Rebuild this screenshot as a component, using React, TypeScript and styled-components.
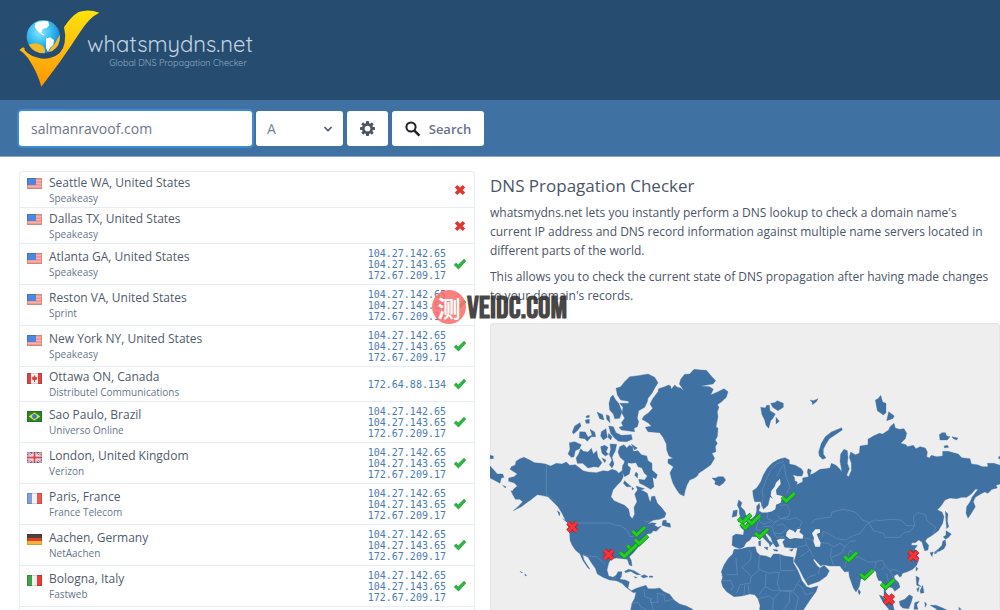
import React from "react";
import styled, { createGlobalStyle } from "styled-components";

const GlobalStyle = createGlobalStyle`
  *, *::before, *::after { box-sizing: border-box; }
  body {
    margin: 0;
    background: #fff;
    color: #4a5568;
    font-family: "Open Sans", "Noto Sans", sans-serif;
  }
`;

const Page = styled.div`
  position: relative;
  display: flex;
  flex-direction: column;
  height: 100vh;
  overflow: hidden;
`;

const Header = styled.header`
  flex: none;
  height: 100px;
  padding: 8px 18px;
  background: #264d70;
`;

const Brand = styled.a`
  display: inline-flex;
  align-items: flex-start;
  color: #c3d3e2;
  text-decoration: none;
`;

const BrandText = styled.span`
  display: flex;
  flex-direction: column;
  align-items: flex-end;
  margin-left: -13px;
  padding-top: 22px;
  font-family: Quicksand, Lato, sans-serif;
  font-weight: 400;
`;

const BrandName = styled.span`
  font-size: 22px;
  line-height: 28px;
`;

const Tagline = styled.span`
  padding-right: 6px;
  color: #8fabc6;
  font-size: 9px;
  line-height: 9px;
`;

const SearchBar = styled.form`
  flex: none;
  display: flex;
  gap: 4px;
  height: 57px;
  padding: 11px 19px;
  background: #4071a3;
  border-bottom: 1px solid #86a5c4;
`;

const controlHeight = "35px";

const DomainInput = styled.input`
  width: 233px;
  height: ${controlHeight};
  padding: 0 12px;
  border: 0;
  border-radius: 3px;
  outline: 0;
  box-shadow: 0 0 0 2px #3f8bd0;
  color: #6b7687;
  font: 14px "Open Sans", "Noto Sans", sans-serif;
`;

const SelectWrap = styled.span`
  position: relative;
  display: block;
  width: 87px;
`;

const TypeSelect = styled.select`
  appearance: none;
  width: 100%;
  height: ${controlHeight};
  padding: 0 11px;
  border: 0;
  border-radius: 3px;
  background: #fff;
  color: #718096;
  font: 14px "Open Sans", "Noto Sans", sans-serif;
`;

const Chevron = styled.svg`
  position: absolute;
  top: 14px;
  right: 10px;
  pointer-events: none;
`;

const Button = styled.button<{ $wide?: boolean }>`
  display: flex;
  align-items: center;
  justify-content: center;
  gap: 8px;
  width: ${(p) => (p.$wide ? "92px" : "41px")};
  height: ${controlHeight};
  padding: 0;
  border: 0;
  border-radius: 3px;
  background: #fff;
  color: #66738a;
  font: 600 13px "Open Sans", "Noto Sans", sans-serif;
`;

const Main = styled.main`
  flex: 1;
  display: grid;
  grid-template-columns: minmax(0, 456fr) minmax(0, 510fr);
  gap: 15px;
  min-height: 0;
  padding: 14px 0 0 19px;
`;

const Results = styled.ul`
  margin: 0;
  padding: 0;
  list-style: none;
  border: 1px solid #e6edf6;
  border-bottom: 0;
  border-radius: 4px 4px 0 0;
`;

const rowHeights: Record<number, string> = { 0: "36px", 1: "35px", 3: "41px" };

const Row = styled.li<{ $lines: number }>`
  display: flex;
  align-items: center;
  height: ${(p) => rowHeights[p.$lines]};
  padding: 0 8px 0 7px;
  border-bottom: 1px solid #e6edf6;
`;

const FlagBox = styled.span`
  align-self: stretch;
  display: flex;
  align-items: center;
  width: 22px;
  padding-bottom: 12px;
`;

const Place = styled.span`
  flex: 1;
  display: flex;
  flex-direction: column;
`;

const City = styled.span`
  color: #4f5b6c;
  font-size: 12px;
  line-height: 17px;
`;

const Provider = styled.span`
  color: #68758a;
  font-size: 10px;
  line-height: 15px;
`;

const Addresses = styled.span`
  display: flex;
  flex-direction: column;
  margin-right: 8px;
`;

const Address = styled.a`
  color: #4a7cb3;
  font: 10px/11px "DejaVu Sans Mono", monospace;
  text-decoration: none;
`;

const Info = styled.section`
  min-width: 0;
`;

const Title = styled.h1`
  margin: 2px 0 4px;
  font-size: 17px;
  font-weight: 400;
  line-height: 26px;
`;

const Text = styled.p`
  margin: 0 0 7px;
  font-size: 12px;
  line-height: 19px;
`;

const MapPanel = styled.div`
  margin-top: 18px;
  border-radius: 4px;
  background: #eeeeee;
  box-shadow: inset 0 0 0 1px #e5e5e5;
  overflow: hidden;
`;

const WorldMap = styled.svg`
  display: block;
  width: 100%;
  height: auto;
`;

const Watermark = styled.div`
  position: absolute;
  top: 286px;
  left: 432px;
  display: flex;
  align-items: center;
  gap: 1px;
  pointer-events: none;
`;

const Seal = styled.span`
  display: flex;
  align-items: center;
  justify-content: center;
  width: 34px;
  height: 34px;
  border-radius: 50%;
  background: rgba(250, 112, 108, 0.88);
  color: #fff;
  font: 700 23px "Noto Sans CJK SC", sans-serif;
`;

const WatermarkText = styled.span`
  padding-top: 4px;
  color: rgba(48, 44, 44, 0.88);
  font: 700 31px/38px "Bebas Neue", Oswald, "Liberation Serif", serif;
`;

const Logo = () => (
  <svg width="82" height="80" viewBox="8 24 246 240" aria-hidden="true">
    <defs>
      <linearGradient id="gold" x1="0" y1="0" x2="0" y2="1">
        <stop offset="0" stopColor="#ffe30a" />
        <stop offset="0.55" stopColor="#ffb80e" />
        <stop offset="1" stopColor="#ff9500" />
      </linearGradient>
      <radialGradient id="globe" cx="0.4" cy="0.35" r="0.7">
        <stop offset="0" stopColor="#8fe6ff" />
        <stop offset="0.5" stopColor="#35bdf0" />
        <stop offset="1" stopColor="#1478c8" />
      </radialGradient>
    </defs>
    <path
      d="M12 150L23 142Q38 152 48 162Q74 182 104 174Q150 168 180 128Q198 104 188 84Q200 50 212 40Q226 26 252 38Q222 52 196 94Q166 140 136 182Q102 228 78 260Q66 218 44 184Q30 160 12 150Z"
      fill="none"
    />
    <path
      d="M12 150L23 142Q36 152 48 162Q74 182 104 174Q142 164 148 128Q152 104 146 82Q166 50 190 36Q220 26 252 38Q222 52 196 94Q166 140 136 182Q102 228 78 260Q66 218 44 184Q30 160 12 150Z"
      fill="url(#gold)"
    />
    <path d="M30 146Q52 172 88 168Q138 162 142 112Q142 96 138 86" fill="none" stroke="#264d70" strokeWidth="9" />
    <circle cx="84" cy="110" r="50" fill="url(#globe)" />
    <path d="M60 70Q74 60 98 64L102 76L94 84L82 86L78 98L90 106L82 106L66 92L58 80Z" fill="#fff" />
    <path d="M92 116L104 112L116 120L114 134L104 144L98 156L92 144Z" fill="#fff" />
    <path d="M40 134Q60 124 80 136Q92 146 88 160Q56 160 40 134Z" fill="#f5bb27" />
    <path d="M134 104Q136 138 110 154L100 156Q106 142 118 132Q126 116 134 104Z" fill="#f5bb27" />
  </svg>
);

const GearIcon = () => (
  <svg width="15" height="15" viewBox="0 0 20 20" aria-hidden="true">
    <g fill="#4a5568">
      {[0, 45, 90, 135].map((a) => (
        <rect key={a} x="8" y="0" width="4" height="20" rx="1" transform={`rotate(${a} 10 10)`} />
      ))}
      <circle cx="10" cy="10" r="7.4" />
    </g>
    <circle cx="10" cy="10" r="3.8" fill="#fff" />
  </svg>
);

const SearchIcon = () => (
  <svg width="16" height="16" viewBox="0 0 16 16" aria-hidden="true">
    <circle cx="6" cy="6" r="4.6" fill="none" stroke="#1f2328" strokeWidth="2" />
    <path d="M9.4 9.6L14.4 14.6" stroke="#1f2328" strokeWidth="2.6" />
  </svg>
);

const StatusIcon = ({ ok }: { ok: boolean }) => (
  <svg width="12" height="12" viewBox="0 0 12 12" role="img" aria-label={ok ? "Resolved" : "Failed"}>
    {ok ? (
      <path d="M1 5.8L4.4 9L11.2 2" fill="none" stroke="#2fb344" strokeWidth="3.4" />
    ) : (
      <path d="M2 2.2L10 9.8M10 2.2L2 9.8" fill="none" stroke="#e3342f" strokeWidth="3.6" />
    )}
  </svg>
);

type Country = "us" | "ca" | "br" | "gb" | "fr" | "de" | "it";

const flagArt: Record<Country, React.ReactNode> = {
  us: (
    <>
      <rect width="15" height="11" fill="#f7b3ac" />
      <path d="M0 1H15M0 4H15M0 7H15M0 10H15" stroke="#ef8279" strokeWidth="1" />
      <rect width="9" height="7" fill="#4c86e0" />
    </>
  ),
  ca: (
    <>
      <rect width="15" height="11" fill="#fbeeee" />
      <path d="M0 0H4V11H0ZM11 0H15V11H11Z" fill="#df4540" />
      <path d="M7.5 2L8.6 4L10.4 4.4L9.4 7H8V9H7V7H5.6L4.6 4.4L6.4 4Z" fill="#e0403c" />
    </>
  ),
  br: (
    <>
      <rect width="15" height="11" fill="#27862b" />
      <path d="M7.5 1.4L13.4 5.5L7.5 9.6L1.6 5.5Z" fill="#dfe04a" />
      <circle cx="7.5" cy="5.5" r="2.4" fill="#3f78c4" />
    </>
  ),
  gb: (
    <>
      <rect width="15" height="11" fill="#6673b5" />
      <path d="M0 0L15 11M15 0L0 11" stroke="#f4d6dc" strokeWidth="2.4" />
      <path d="M0 0L15 11M15 0L0 11" stroke="#dd5a62" strokeWidth="0.8" />
      <path d="M7.5 0V11M0 5.5H15" stroke="#fff" strokeWidth="4" />
      <path d="M7.5 0V11M0 5.5H15" stroke="#e0474c" strokeWidth="2" />
    </>
  ),
  fr: (
    <>
      <rect width="15" height="11" fill="#f3f3f5" />
      <rect width="5" height="11" fill="#7f9fdd" />
      <rect x="10" width="5" height="11" fill="#f0574f" />
    </>
  ),
  de: (
    <>
      <rect width="15" height="4" fill="#4c4340" />
      <rect y="4" width="15" height="3" fill="#e0412e" />
      <rect y="7" width="15" height="4" fill="#f3b53a" />
    </>
  ),
  it: (
    <>
      <rect width="15" height="11" fill="#f6f4f2" />
      <rect width="5" height="11" fill="#3fa14a" />
      <rect x="10" width="5" height="11" fill="#ec3a35" />
    </>
  ),
};

const Flag = ({ country }: { country: Country }) => (
  <svg width="15" height="11" viewBox="0 0 15 11" aria-hidden="true">
    {flagArt[country]}
    <rect x="0.5" y="0.5" width="14" height="10" fill="none" stroke="#000" strokeOpacity="0.13" />
  </svg>
);

const pool = ["104.27.142.65", "104.27.143.65", "172.67.209.17"];

const servers: { country: Country; city: string; provider: string; ips: string[] }[] = [
  { country: "us", city: "Seattle WA, United States", provider: "Speakeasy", ips: [] },
  { country: "us", city: "Dallas TX, United States", provider: "Speakeasy", ips: [] },
  { country: "us", city: "Atlanta GA, United States", provider: "Speakeasy", ips: pool },
  { country: "us", city: "Reston VA, United States", provider: "Sprint", ips: pool },
  { country: "us", city: "New York NY, United States", provider: "Speakeasy", ips: pool },
  { country: "ca", city: "Ottawa ON, Canada", provider: "Distributel Communications", ips: ["172.64.88.134"] },
  { country: "br", city: "Sao Paulo, Brazil", provider: "Universo Online", ips: pool },
  { country: "gb", city: "London, United Kingdom", provider: "Verizon", ips: pool },
  { country: "fr", city: "Paris, France", provider: "France Telecom", ips: pool },
  { country: "de", city: "Aachen, Germany", provider: "NetAachen", ips: pool },
  { country: "it", city: "Bologna, Italy", provider: "Fastweb", ips: pool },
];

const americas = [
  "M108 412L125 420 140 428 158 430 172 432 188 438 205 430 222 432 235 426 245 436 262 434 275 444 285 452 300 456 325 458 345 452 360 454 372 448 385 452 392 460 402 452 406 470 398 485 388 495 375 510 369 530 378 542 395 550 410 556 422 568 426 588 433 596 440 582 438 562 447 545 440 522 450 508 465 512 478 520 484 540 488 546 490 530 500 528 508 550 520 562 534 580 530 592 515 598 495 601 478 612 492 608 505 610 499 616 510 622 520 618 505 634 496 632 490 640 478 642 470 652 460 668 450 682 435 700 424 710 430 722 432 738 424 735 418 718 405 716 385 714 368 718 362 730 357 750 362 768 375 772 385 765 390 755 402 755 400 770 395 778 412 780 424 786 420 804 430 812 445 805 460 800 450 815 436 818 422 808 412 800 402 790 385 782 365 780 345 772 328 762 322 745 310 728 300 712 284 704 288 720 306 748 300 744 285 722 276 702 262 690 252 675 246 660 245 640 240 610 232 600 222 580 210 560 195 545 180 530 160 526 148 524 138 532 128 540 120 545 100 560 76 572 90 560 104 545 95 538 82 538 72 520 76 508 88 498 78 488 62 484 62 474 78 470 88 462 66 448 70 440 82 435 84 424 96 416Z",
  "M428 870L432 850 440 835 445 812 460 800 474 796 480 806 500 806 515 804 528 815 545 823 558 840 575 852 595 858 614 868 614 880 428 880Z",
  "M486 252L495 235 510 215 512 206 530 200 542 195 548 198 550 208 560 195 568 202 578 204 587 212 582 203 574 192 578 178 590 163 605 162 618 148 640 150 655 151 670 168 683 182 675 192 638 198 665 200 676 208 668 225 690 215 708 206 720 215 715 232 700 246 688 254 693 262 688 275 690 290 684 320 690 325 688 350 682 360 688 370 682 380 684 395 672 400 680 415 668 435 650 448 632 460 628 468 618 475 605 480 597 495 592 510 588 528 575 522 565 508 555 490 550 475 546 458 556 440 540 430 540 418 555 415 543 408 536 390 535 372 525 352 515 338 480 335 472 322 490 318 480 308 462 298 468 288 482 278 494 265Z",
  "M384 205L398 200 410 185 425 170 450 167 480 162 500 172 510 188 500 205 492 220 480 235 478 245 470 262 452 272 448 295 452 305 448 320 438 325 440 335 400 330 393 322 405 318 400 308 410 295 402 280 405 262 395 250 422 250 422 244 398 240 388 225Z",
  "M375 225L383 240 392 250 402 275 395 295 380 296 376 282 365 270 363 250 368 232Z",
  "M362 318L376 320 384 338 400 346 430 344 433 358 416 365 392 364 380 355 368 340Z",
  "M244 368L260 365 280 374 274 386 262 392 258 410 250 412 240 402 246 388Z",
  "M278 386L286 394 300 396 310 385 316 402 326 392 330 412 342 428 332 442 318 440 300 444 284 430 268 430 264 414 272 402Z",
  "M275 335L292 336 300 352 312 345 306 328 320 336 323 350 310 350 298 364 290 356 274 354Z",
  "M253 336L260 318 276 308 279 318 268 332 256 342Z",
  "M327 276L344 284 348 300 335 296ZM355 284L364 288 366 308 356 298ZM294 288L304 286 304 292 296 294ZM292 300L304 298 304 310 294 310Z",
  "M340 335L354 326 358 352 346 360 338 348ZM362 340L372 350 368 360 360 352Z",
  "M338 380L350 376 360 382 354 396 362 402 352 408 342 400ZM366 372L386 373 382 392 372 412 378 432 372 444 364 434 372 420 364 404 368 388ZM342 414L354 420 350 428Z",
  "M395 380L408 374 416 384 424 376 434 380 436 394 450 392 460 404 476 408 480 422 492 430 492 450 508 464 504 476 494 472 498 500 488 508 468 496 455 490 452 478 470 480 478 468 468 458 462 444 450 440 444 428 430 430 420 428 418 440 406 436 410 424 396 412 390 396Z",
  "M430 372L448 384 440 390ZM404 436L412 430 428 444 424 462 410 470 402 456ZM444 456L450 462 448 474 440 466ZM410 482L420 492 430 500 416 500 406 490ZM444 498L470 506 450 512ZM432 502L438 506 432 510Z",
  "M672 474L684 474 690 470 706 470 713 480 706 490 694 498 680 492 682 484Z",
  "M524 602L534 600 536 608 546 610 548 622 538 620 530 618 522 616Z",
  "M6 438L14 446 28 462 44 462 48 472 40 474 36 490 22 482 6 474ZM6 406L16 408 16 416 6 416ZM44 496L54 500 52 504ZM68 512L76 514 72 518ZM208 572L216 578 214 588ZM224 596L240 606 236 606Z",
  "M410 754L422 748 438 752 458 764 446 764 428 754 412 758ZM458 768L470 764 480 770 466 774ZM484 768L494 768 494 772 484 772ZM438 770L448 772 442 774ZM96 754L104 758 100 758ZM110 762L116 766 112 768Z",
];

const oldWorld = [
  "M-22 648L-12 642 10 645 12 630 2 622 18 614 24 604 38 594 46 586 50 574 50 558 58 550 60 562 56 572 66 578 80 578 95 574 106 568 106 552 120 548 90 530 84 556 70 568 62 545 44 545 40 530 38 512 50 504 62 486 70 465 82 445 96 430 112 420 122 416 135 413 148 420 148 432 166 436 184 446 190 456 186 468 172 468 158 464 164 474 164 482 172 486 170 494 182 488 188 486 188 474 206 470 202 456 204 446 214 450 210 464 222 460 240 448 256 446 270 444 274 430 288 436 300 448 306 456 300 424 302 402 312 388 322 392 324 412 322 430 328 446 320 466 326 470 334 452 334 430 328 412 332 396 346 404 358 400 360 378 384 374 384 358 400 348 418 340 428 342 446 330 450 320 462 310 466 324 478 328 492 326 500 340 496 356 482 370 498 374 502 380 520 376 528 386 540 380 556 384 562 396 560 410 568 414 574 406 590 410 608 408 608 394 624 394 640 398 655 402 665 413 690 416 694 432 712 434 728 440 744 440 742 430 762 430 786 438 786 490 768 496 772 504 756 508 744 520 734 516 722 522 706 532 700 545 706 560 694 580 684 595 678 580 680 560 690 546 696 532 714 508 706 508 694 522 680 532 665 532 650 536 630 534 615 540 605 555 592 570 606 576 612 590 608 610 595 632 582 642 570 650 560 656 556 664 566 676 564 690 554 692 550 680 546 666 536 660 526 668 516 668 514 676 532 676 524 688 530 705 536 720 530 736 518 748 500 756 488 760 480 772 472 762 462 768 464 776 476 788 480 802 464 814 458 804 446 800 440 798 436 812 446 836 458 850 464 876 455 868 440 845 432 826 432 800 424 782 416 782 410 768 408 755 400 750 388 754 380 766 362 778 358 800 348 816 340 804 328 770 326 754 314 756 304 744 300 738 270 738 250 734 242 738 222 716 220 720 232 738 240 744 252 736 268 752 260 768 238 784 204 796 190 772 176 744 162 724 168 706 172 684 156 684 134 682 128 666 136 656 120 656 110 660 118 678 108 682 98 668 92 652 78 638 74 640 88 662 98 670 90 680 88 672 68 652 60 642 48 650 36 650 30 660 18 668 12 680 0 686 -14 682 -24 676Z",
  "M-18 688L0 688 22 682 46 680 50 696 60 706 78 708 92 714 100 702 116 702 134 708 160 712 160 728 174 752 186 782 200 800 212 804 234 798 228 815 210 840 190 870 190 880 58 880 60 856 54 836 44 824 30 822 5 828 -18 830 -40 815 -52 800 -56 785 -52 770 -56 755 -48 735 -35 715 -22 702Z",
  "M-4 540L6 548 2 560 14 572 18 586 24 590 16 602 -6 606 2 594 -2 580 -2 568 -8 556ZM-20 572L-8 570 -10 588 -24 592Z",
  "M238 408L236 396 244 370 256 350 274 336 305 323 307 330 286 344 268 356 258 372 250 388 250 402 258 414 248 418Z",
  "M62 262L76 264 80 256 88 256 90 272 106 282 98 296 92 302 86 325 78 316 74 300 66 284ZM92 250L104 248 112 242 130 250 130 262 114 272 98 262ZM108 292L118 304 108 312Z",
  "M210 240L220 242 234 236 230 244 218 254 216 246Z",
  "M406 240L414 236 422 226 428 246 438 250 438 278 430 285 412 272ZM446 275L463 288 458 296 440 302Z",
  "M598 344L606 338 616 338 620 348 630 350 622 360 600 360ZM636 350L654 354 650 360 640 356ZM612 378L622 376 626 382 614 384ZM776 410L786 408 786 416 776 416Z",
  "M616 574L624 582 622 602 626 620 620 626 618 604ZM618 632L634 642 626 652 616 658 610 650 618 646ZM616 660L618 674 612 686 598 694 584 696 596 686 606 676 608 664ZM570 698L580 696 576 710ZM584 696L592 698 584 702Z",
  "M356 808L362 816 358 824 354 816ZM528 740L534 746 528 754ZM528 768L538 774 534 792 544 800 530 796ZM548 796L552 818 542 820 540 812ZM530 806L538 802 534 816ZM480 762L486 766 482 770Z",
  "M478 844L494 838 508 824 518 830 514 846 506 866 488 864 480 856ZM418 826L426 828 456 862 464 880 450 872 430 848ZM524 848L538 844 530 854 534 868 522 868ZM554 846L560 852 556 862ZM570 856L588 856 608 864 640 880 600 880 588 866ZM656 862L664 868 658 870Z",
  "M100 688L114 690 112 694 102 692ZM148 690L160 686 156 694ZM56 664L62 662 62 678 56 676ZM72 682L84 682 82 690Z",
];

const inlandSeas = [
  "M120 476L108 488 104 500 94 512 92 526 98 536 94 548 86 562 72 568 68 576 84 576 96 574 106 566 108 554 122 548 124 540 140 540 126 528 110 524 108 510 122 492Z",
  "M138 648L140 636 148 628 160 632 166 638 172 628 182 626 178 636 190 646 188 656 164 654 150 658Z",
  "M216 640L226 628 240 628 240 638 230 642 236 656 242 668 240 680 226 680 220 664 222 654Z",
];

const americasBorders =
  "M175 432V526L188 532 204 546M243 609H366L378 614 400 618 420 634 426 650 440 648M284 704L300 708 324 710 340 722 352 734M470 604L484 604M372 780L384 772M398 786L404 792M468 808L470 830 490 836 488 848 510 846 508 820 528 824 530 844 554 838M430 852L450 846 458 860 474 868M486 836L496 870M700 768L708 762 722 736 742 736 744 710";

const oldWorldBorders =
  "M64 560L70 530 66 512 80 476 92 450 108 432 132 424M110 470L120 450 132 432 138 470 150 500 140 520M120 556L140 554 150 572 146 590 120 596 112 586M84 578L82 594 100 606 118 600M60 580L58 604 70 612 92 606M40 596L54 608 48 628 62 632M70 620L96 618 110 604M96 620L104 640 124 640 140 626 130 612 110 616M120 596L150 598 168 592 186 606 180 620 166 628M100 636L110 652 132 650M214 610L224 598 248 594 272 592 276 576 310 568 346 576 368 600 386 608 372 624 360 640 338 648 316 660 290 656 268 642 250 634 246 652M386 608L400 632 430 640 436 652 478 652 492 638 510 634 524 618 500 616 482 600 450 598 420 602 404 600ZM524 618L520 590 534 578 556 584 562 604 588 622 578 642M242 668L262 670 282 680 300 670 316 680 330 664 348 662M188 652L212 658 220 664M168 682L200 676 210 690 220 712M200 676L196 660M210 690L196 700 178 712M274 684L272 712 282 738M316 680L304 700 276 712M330 690L320 720 314 744M330 690L352 710 386 726 408 726 426 720 436 738 424 750M408 728L404 746M436 738L450 752 462 748 480 756M440 760L446 790M450 752L460 774 470 790M336 710L352 712M228 764L208 770 198 780M234 764L240 744M26 690L34 700 32 720 6 742M58 706L56 748 88 760 118 756M120 704L122 752 164 752M6 742L34 770 56 750M34 770L30 790 0 794M78 762L76 800 56 824M118 756L112 788 120 812 160 812 172 790 180 780M76 800L100 812 118 810M54 836L88 828 100 838 98 870M100 838L122 812 160 816 176 834 166 870M172 792L186 802 196 824 220 818M150 816L148 846 130 870M-40 764L-8 764 -12 714M0 794L-10 820M14 796L12 826M24 794L28 822M-52 782H-28L-20 800 -28 812";

type Point = [number, number];

const failed: Point[] = [[247, 612], [356, 695], [1270, 698], [1197, 829]];
const resolved: Point[] = [
  [895, 522], [446, 624], [431, 668], [454, 650], [409, 688], [764, 586], [772, 603], [791, 590],
  [815, 630], [1082, 700], [1130, 753], [1193, 782],
];

const failedShape = "M-13 -13L13 13M13 -13L-13 13";
const resolvedShape = "M-19 0L-6 12L19 -12";

const Marker = ({ at, ok }: { at: Point; ok: boolean }) => (
  <g transform={`translate(${at[0]} ${at[1]})`} fill="none">
    <path d={ok ? resolvedShape : failedShape} stroke={ok ? "#168a22" : "#a3262c"} strokeWidth={ok ? 13 : 15} />
    <path d={ok ? resolvedShape : failedShape} stroke={ok ? "#22d022" : "#fa3236"} strokeWidth={ok ? 9 : 10} />
  </g>
);

const PropagationMap = () => (
  <WorldMap viewBox="0 0 1530 864" role="img" aria-label="Map of DNS propagation results">
    <g transform="translate(-6 -9)" fill="#4071a3" stroke="#4071a3" strokeWidth="1" strokeLinejoin="round">
      {americas.map((d) => (
        <path key={d} d={d} />
      ))}
      <path d={americasBorders} fill="none" stroke="#6890b8" strokeWidth="2" />
    </g>
    <g transform="translate(750 -9)" fill="#4071a3" stroke="#4071a3" strokeWidth="1" strokeLinejoin="round">
      {oldWorld.map((d) => (
        <path key={d} d={d} />
      ))}
      {inlandSeas.map((d) => (
        <path key={d} d={d} fill="#eeeeee" stroke="none" />
      ))}
      <path d={oldWorldBorders} fill="none" stroke="#6890b8" strokeWidth="2" />
    </g>
    {resolved.map((p) => (
      <Marker key={p.join()} at={p} ok />
    ))}
    {failed.map((p) => (
      <Marker key={p.join()} at={p} ok={false} />
    ))}
  </WorldMap>
);

export default function App() {
  return (
    <Page>
      <GlobalStyle />
      <Header>
        <Brand href="#">
          <Logo />
          <BrandText>
            <BrandName>whatsmydns.net</BrandName>
            <Tagline>Global DNS Propagation Checker</Tagline>
          </BrandText>
        </Brand>
      </Header>
      <SearchBar onSubmit={(e) => e.preventDefault()}>
        <DomainInput aria-label="Domain name" defaultValue="salmanravoof.com" />
        <SelectWrap>
          <TypeSelect aria-label="Record type" defaultValue="A">
            <option>A</option>
          </TypeSelect>
          <Chevron width="10" height="8" viewBox="0 0 10 8" aria-hidden="true">
            <path d="M1.4 2L5 5.6L8.6 2" fill="none" stroke="#4a5568" strokeWidth="1.5" />
          </Chevron>
        </SelectWrap>
        <Button type="button" aria-label="Settings">
          <GearIcon />
        </Button>
        <Button type="submit" $wide>
          <SearchIcon />
          Search
        </Button>
      </SearchBar>
      <Main>
        <Results>
          {servers.map((s) => (
            <Row key={s.city} $lines={s.ips.length}>
              <FlagBox>
                <Flag country={s.country} />
              </FlagBox>
              <Place>
                <City>{s.city}</City>
                <Provider>{s.provider}</Provider>
              </Place>
              <Addresses>
                {s.ips.map((ip) => (
                  <Address key={ip} href="#">
                    {ip}
                  </Address>
                ))}
              </Addresses>
              <StatusIcon ok={s.ips.length > 0} />
            </Row>
          ))}
        </Results>
        <Info>
          <Title>DNS Propagation Checker</Title>
          <Text>
            whatsmydns.net lets you instantly perform a DNS lookup to check a domain name's current IP address and DNS
            record information against multiple name servers located in different parts of the world.
          </Text>
          <Text>
            This allows you to check the current state of DNS propagation after having made changes to your domain's
            records.
          </Text>
          <MapPanel>
            <PropagationMap />
          </MapPanel>
        </Info>
      </Main>
      <Watermark>
        <Seal>测</Seal>
        <WatermarkText>VEIDC.COM</WatermarkText>
      </Watermark>
    </Page>
  );
}
